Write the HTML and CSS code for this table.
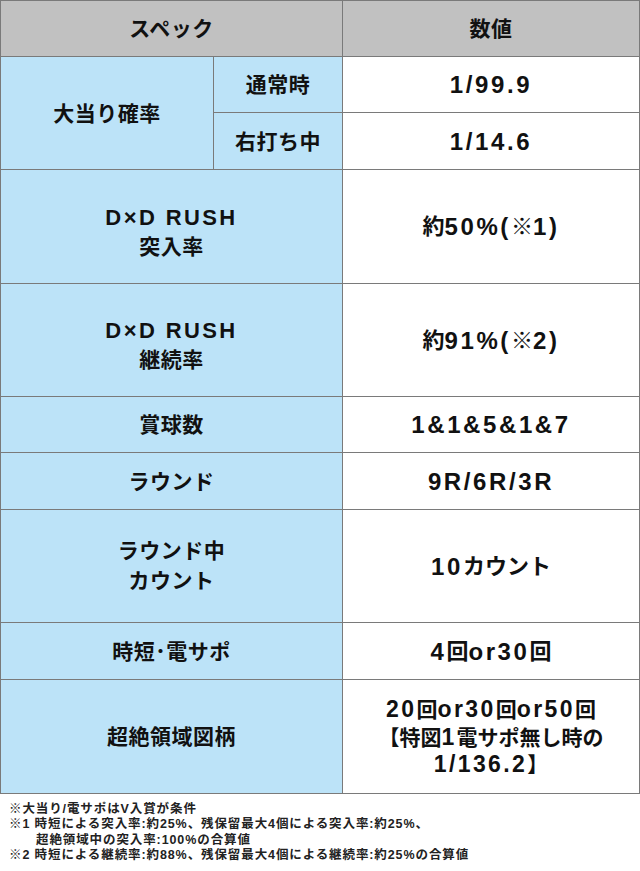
FILE: index.html
```html
<!DOCTYPE html>
<html lang="ja">
<head>
<meta charset="utf-8">
<link rel="stylesheet" href="styles.css">
</head>
<body>
<div class="spec">
  <div class="cell head span2 h56">スペック</div>
  <div class="cell head h56">数値</div>

  <div class="cell key rows2">大当り確率</div>
  <div class="cell key h56">通常時</div>
  <div class="cell val h56"><span class="en">1/99.9</span></div>
  <div class="cell key h57">右打ち中</div>
  <div class="cell val h57"><span class="en">1/14.6</span></div>

  <div class="cell key span2 h114 low"><span class="two"><span class="enk">D×D RUSH</span><br>突入率</span></div>
  <div class="cell val h114">約<span class="en">50%(</span>※<span class="en">1)</span></div>

  <div class="cell key span2 h113 low"><span class="two"><span class="enk">D×D RUSH</span><br>継続率</span></div>
  <div class="cell val h113">約<span class="en">91%(</span>※<span class="en">2)</span></div>

  <div class="cell key span2 h56">賞球数</div>
  <div class="cell val h56"><span class="en">1&amp;1&amp;5&amp;1&amp;7</span></div>

  <div class="cell key span2 h57">ラウンド</div>
  <div class="cell val h57"><span class="en">9R/6R/3R</span></div>

  <div class="cell key span2 h113"><span class="two tall">ラウンド中<br>カウント</span></div>
  <div class="cell val h113"><span class="en">10</span>カウント</div>

  <div class="cell key span2 h57">時短･電サポ</div>
  <div class="cell val h57"><span class="en">4</span>回<span class="en">or30</span>回</div>

  <div class="cell key span2 h114">超絶領域図柄</div>
  <div class="cell val h114 three"><span class="two"><span class="en">20</span>回<span class="en">or30</span>回<span class="en">or50</span>回<br>【特図<span class="en">1</span>電サポ無し時の<br><span class="en">1/136.2</span>】</span></div>
</div>
<div class="notes">
  <p>※大当り/電サポはV入賞が条件</p>
  <p>※1 時短による突入率:約25%、残保留最大4個による突入率:約25%、</p>
  <p class="indent">超絶領域中の突入率:100%の合算値</p>
  <p>※2 時短による継続率:約88%、残保留最大4個による継続率:約25%の合算値</p>
</div>
</body>
</html>
```

FILE: styles.css
```css
html, body {
  margin: 0;
  padding: 0;
  background: #ffffff;
}

body {
  width: 640px;
  font-family: "Liberation Sans", "Noto Sans CJK JP", sans-serif;
  font-weight: bold;
  color: #111111;
}

.spec {
  display: grid;
  grid-template-columns: 213px 129px 297px;
  border-top: 1px solid #7a7a7a;
  border-left: 1px solid #7a7a7a;
  width: 639px;
}

.cell {
  box-sizing: border-box;
  border-right: 1px solid #7a7a7a;
  border-bottom: 1px solid #7a7a7a;
  display: flex;
  align-items: center;
  justify-content: center;
  text-align: center;
  font-size: 21px;
  line-height: 27px;
  letter-spacing: 0.5px;
}

.head {
  background: #c1c1c1;
}

.key {
  background: #bce3f8;
}

.val {
  background: #ffffff;
  font-size: 22px;
  letter-spacing: 0;
}

.en {
  font-size: 24px;
  letter-spacing: 2.6px;
}

.enk {
  font-size: 22px;
  letter-spacing: 2.4px;
}

.span2 {
  grid-column: span 2;
}

.rows2 {
  grid-row: span 2;
}

.h56 { height: 56px; }
.h57 { height: 57px; }
.h113 { height: 113px; }
.h114 { height: 114px; }

.two {
  display: block;
}

.low {
  padding-top: 10px;
  line-height: 29px;
}

.tall {
  line-height: 30px;
}

.three {
  font-size: 21px;
  line-height: 26.5px;
  padding-top: 2px;
}

.three .en {
  font-size: 23px;
  letter-spacing: 2.4px;
}

.notes {
  padding: 8px 0 0 9px;
  font-size: 12.5px;
  line-height: 15.3px;
  letter-spacing: 0.9px;
  color: #222222;
}

.notes p {
  margin: 0;
  white-space: nowrap;
}

.notes .indent {
  padding-left: 27px;
}
```
